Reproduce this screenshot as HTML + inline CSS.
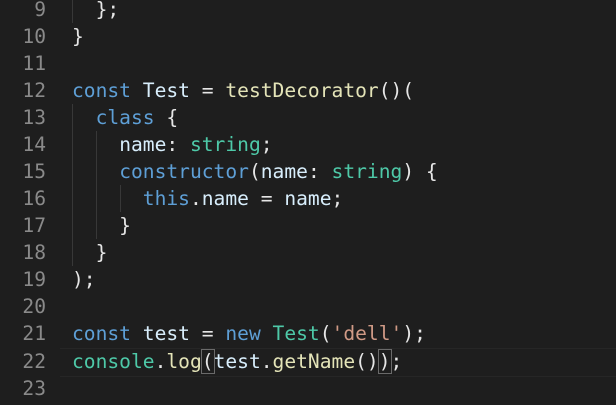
<!DOCTYPE html><html><head><style>
body{margin:0;width:616px;height:405px;background:#1e1e1e;overflow:hidden;position:relative;font-family:"DejaVu Sans Mono","Liberation Mono",monospace;font-size:19.6px}
.l{position:absolute;left:0;height:27px;line-height:27px;white-space:pre;color:#e6e6e6}
.n{position:absolute;left:0;width:46px;text-align:right;color:#8a8a8a}
.c{position:absolute;left:72px}
.k{color:#5e9fd6}.v{color:#d8eefc}.f{color:#e4e4b8}.t{color:#4ec9a8}.s{color:#d09a86}
.g{position:absolute;width:1px;background:#383838}
.hl{position:absolute;left:60px;right:0;top:348px;height:27px;border-top:1px solid #262626;border-bottom:1px solid #262626}
.b{outline:1px solid #6a6a6a}
</style></head><body>
<div class="hl"></div>
<div class="g" style="left:72px;top:-4px;height:27px"></div>
<div class="g" style="left:72px;top:104px;height:162px"></div>
<div class="g" style="left:96px;top:131px;height:108px"></div>
<div class="g" style="left:120px;top:185px;height:27px"></div>
<div class="l" style="top:-4px"><span class="n">9</span><span class="c">  };</span></div>
<div class="l" style="top:23px"><span class="n">10</span><span class="c">}</span></div>
<div class="l" style="top:50px"><span class="n">11</span></div>
<div class="l" style="top:77px"><span class="n">12</span><span class="c"><span class="k">const</span> <span class="v">Test</span> = <span class="f">testDecorator</span>()(</span></div>
<div class="l" style="top:104px"><span class="n">13</span><span class="c">  <span class="k">class</span> {</span></div>
<div class="l" style="top:131px"><span class="n">14</span><span class="c">    <span class="v">name</span>: <span class="t">string</span>;</span></div>
<div class="l" style="top:158px"><span class="n">15</span><span class="c">    <span class="k">constructor</span>(<span class="v">name</span>: <span class="t">string</span>) {</span></div>
<div class="l" style="top:185px"><span class="n">16</span><span class="c">      <span class="k">this</span>.<span class="v">name</span> = <span class="v">name</span>;</span></div>
<div class="l" style="top:212px"><span class="n">17</span><span class="c">    }</span></div>
<div class="l" style="top:239px"><span class="n">18</span><span class="c">  }</span></div>
<div class="l" style="top:266px"><span class="n">19</span><span class="c">);</span></div>
<div class="l" style="top:293px"><span class="n">20</span></div>
<div class="l" style="top:320px"><span class="n">21</span><span class="c"><span class="k">const</span> <span class="v">test</span> = <span class="k">new</span> <span class="t">Test</span>(<span class="s">'dell'</span>);</span></div>
<div class="l" style="top:348px"><span class="n">22</span><span class="c"><span class="t">console</span>.<span class="f">log</span><span class="b">(</span><span class="v">test</span>.<span class="f">getName</span>()<span class="b">)</span>;</span></div>
<div class="l" style="top:375px"><span class="n">23</span></div>
</body></html>
